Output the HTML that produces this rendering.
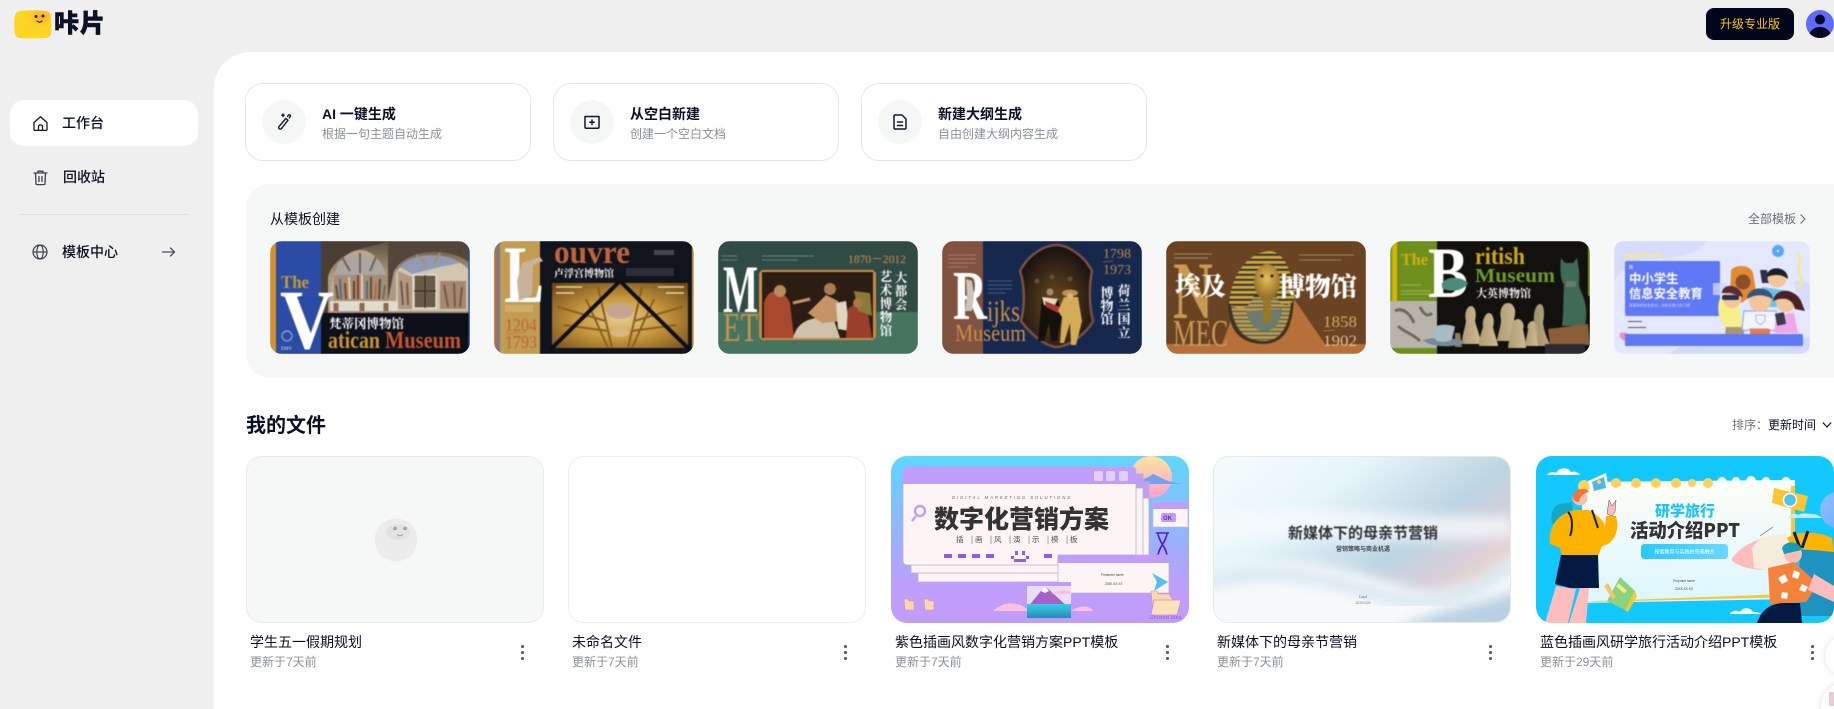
<!DOCTYPE html>
<html lang="zh-CN">
<head>
<meta charset="utf-8">
<title>咔片</title>
<style>
html,body{margin:0;padding:0;width:1834px;height:709px;overflow:hidden}
#root{position:relative;width:1834px;height:709px;overflow:hidden;background:#efefef;font-family:"Liberation Sans","Noto Sans CJK SC",sans-serif;color:#0b0f24}
.a{position:absolute;white-space:nowrap}
.main{position:absolute;left:214px;top:52px;width:1620px;height:657px;background:#fff;border-top-left-radius:36px}
.nav{font-size:14px;line-height:20px;font-weight:500;color:#0b0f24}
.card{position:absolute;top:83px;width:284px;height:76px;border:1px solid #e4e6e7;border-radius:18px;background:#fff;box-sizing:content-box}
.circ{position:absolute;left:16px;top:16px;width:44px;height:44px;border-radius:50%;background:#f5f7f6}
.card b{position:absolute;left:76px;top:20px;font-size:14px;line-height:20px;font-weight:700;color:#0b0f24;white-space:nowrap}
.card span{position:absolute;left:76px;top:41px;font-size:12px;line-height:18px;color:#8b9098;white-space:nowrap}
.card svg{position:absolute;left:28px;top:28px}
.panel{position:absolute;left:246px;top:184px;width:1588px;height:194px;background:#f6f8f7;border-radius:24px 0 0 24px}
.th{position:absolute;top:241px;width:200px;height:113px;border-radius:12px;overflow:hidden}
.th svg{display:block;filter:blur(.4px)}
.fc{position:absolute;top:456px;width:298px;height:167px;border-radius:16px;overflow:hidden;box-sizing:border-box}
.fc svg{display:block}
.ft{position:absolute;top:632px;font-size:14px;line-height:20px;color:#0b0f24;white-space:nowrap}
.fs{position:absolute;top:653px;font-size:12px;line-height:18px;color:#8b9098;white-space:nowrap}
.dots{position:absolute;top:645px;width:3px;height:16px}
.dots i{display:block;width:2.500px;height:2.500px;border-radius:50%;background:#555a68;margin-bottom:3.500px}
</style>
</head>
<body>
<div id="root">
<!-- logo -->
<svg class="a" style="left:14px;top:10px" width="38" height="29" viewBox="0 0 38 29">
<defs><radialGradient id="lg" cx=".72" cy=".25" r=".55"><stop offset="0" stop-color="#fba82a"/><stop offset=".55" stop-color="#ffcf24"/><stop offset="1" stop-color="#ffd523"/></radialGradient></defs>
<path d="M6 1C14 0 26 0 32 1C36 1.500 37 4 37 8C37.500 14 37.500 20 37 23C36.500 27 34 28 30 28C22 28.500 12 28.500 6 28C2 27.500 .5 25 .5 21C0 15 0 10 .8 6C1.300 3 3 1.500 6 1Z" fill="url(#lg)"/>
<circle cx="22" cy="6.500" r="1.500" fill="#2a1c10"/><circle cx="29" cy="6" r="1.500" fill="#2a1c10"/>
<path d="M23 11q2.500 2.500 5 0" stroke="#2a1c10" stroke-width="1.100" fill="none" stroke-linecap="round"/>
</svg>
<div class="a" style="left:54px;top:6px;font-size:25px;line-height:36px;font-weight:900;color:#0b1024;letter-spacing:1px;-webkit-text-stroke:.5px #0b1024">咔片</div>

<div class="a" style="left:1706px;top:8px;width:88px;height:32px;border-radius:8px;background:#02051a;color:#f4c81e;font-size:12px;line-height:32px;text-align:center">升级专业版</div>
<svg class="a" style="left:1806px;top:10px" width="28" height="28" viewBox="0 0 28 28">
<circle cx="14" cy="14" r="14" fill="#5b6cff"/><circle cx="14" cy="9.500" r="5" fill="#06091f"/><path d="M3.600 23.500C6 18.500 10 17 14 17C18 17 22 18.500 24.400 23.500C21.800 26.300 18 28 14 28C10 28 6.200 26.300 3.600 23.500Z" fill="#06091f"/>
</svg>

<!-- sidebar -->
<div class="a" style="left:10px;top:100px;width:188px;height:46px;border-radius:14px;background:#fff"></div>
<svg class="a" style="left:32px;top:115px" width="17" height="17" viewBox="0 0 17 17" fill="none" stroke="#141829" stroke-width="1.300" stroke-linejoin="round"><path d="M2 7.500L8.500 1.800L15 7.500V14.200C15 15 14.500 15.400 13.800 15.400H3.200C2.500 15.400 2 15 2 14.200Z"/><path d="M6.500 15.400V11.500C6.500 10.500 7.500 10 8.500 10C9.500 10 10.500 10.500 10.500 11.500V15.400"/></svg>
<div class="a nav" style="left:62px;top:113px">工作台</div>
<svg class="a" style="left:32px;top:169px" width="17" height="17" viewBox="0 0 17 17" fill="none" stroke="#3e4250" stroke-width="1.300" stroke-linecap="round" stroke-linejoin="round"><path d="M2 4H15M6 4V2.200H11V4M3.500 4L4 14.500C4 15.200 4.500 15.600 5.200 15.600H11.800C12.500 15.600 13 15.200 13 14.500L13.500 4M7 7.500V12.500M10 7.500V12.500"/></svg>
<div class="a nav" style="left:63px;top:167px">回收站</div>
<div class="a" style="left:20px;top:214px;width:168px;height:1px;background:#dedede"></div>
<svg class="a" style="left:32px;top:244px" width="16" height="16" viewBox="0 0 16 16" fill="none" stroke="#3e4250" stroke-width="1.200"><circle cx="8" cy="8" r="7"/><ellipse cx="8" cy="8" rx="3.200" ry="7"/><path d="M1 8H15"/></svg>
<div class="a nav" style="left:62px;top:242px">模板中心</div>
<svg class="a" style="left:161px;top:246px" width="15" height="12" viewBox="0 0 15 12" fill="none" stroke="#4c5160" stroke-width="1.300" stroke-linecap="round" stroke-linejoin="round"><path d="M1.500 6H13.500M9.500 2L13.500 6L9.500 10"/></svg>

<div class="main"></div>

<!-- action cards -->
<div class="card" style="left:245px">
<div class="circ"></div>
<svg width="20" height="20" viewBox="0 0 20 20" fill="none" stroke="#141829" stroke-width="1.400" stroke-linecap="round" stroke-linejoin="round"><path d="M11.800 6.500L14 8.200L7.500 16.500C7 17.200 6 17.300 5.300 16.800C4.600 16.300 4.500 15.300 5 14.600Z"/><path d="M13.500 4.500L14.500 3.200C15 2.700 15.600 2.700 16 3C16.500 3.400 16.500 4 16.200 4.500L15.300 5.800"/><path d="M9 2V4.500M7.800 3.200H10.200"/></svg>
<b>AI 一键生成</b><span>根据一句主题自动生成</span></div>
<div class="card" style="left:553px">
<div class="circ"></div>
<svg width="20" height="20" viewBox="0 0 20 20" fill="none" stroke="#141829" stroke-width="1.500" stroke-linecap="round" stroke-linejoin="round"><path d="M3 4.500H17V15C17 15.800 16.500 16.200 15.800 16.200H4.200C3.500 16.200 3 15.800 3 15Z"/><path d="M10 8V12.500M7.800 10.200H12.200"/></svg>
<b>从空白新建</b><span>创建一个空白文档</span></div>
<div class="card" style="left:861px">
<div class="circ"></div>
<svg width="20" height="20" viewBox="0 0 20 20" fill="none" stroke="#141829" stroke-width="1.500" stroke-linecap="round" stroke-linejoin="round"><path d="M4 4.200C4 3.400 4.500 3 5.200 3H12L16 7V15.800C16 16.600 15.500 17 14.800 17H5.200C4.500 17 4 16.600 4 15.800Z"/><path d="M7.500 10H12.500M7.500 13.500H12.500"/></svg>
<b>新建大纲生成</b><span>自由创建大纲内容生成</span></div>

<div class="panel"></div>
<div class="a" style="left:270px;top:209px;font-size:14px;line-height:20px;color:#0b0f24">从模板创建</div>
<div class="a" style="left:1748px;top:210px;font-size:12px;line-height:18px;color:#6a6f7a">全部模板</div>
<svg class="a" style="left:1799px;top:213px" width="8" height="12" viewBox="0 0 8 12" fill="none" stroke="#6a6f7a" stroke-width="1.100"><path d="M1.500 1.500L6 6L1.500 10.500"/></svg>

<!-- T1 Vatican -->
<div class="th" style="left:270px">
<svg width="200" height="113" viewBox="0 0 200 113">
<defs><linearGradient id="v1" x1="0" y1="0" x2="0" y2="1"><stop offset="0" stop-color="#5e5040"/><stop offset=".5" stop-color="#b09c82"/><stop offset="1" stop-color="#a8967c"/></linearGradient></defs>
<rect width="200" height="113" fill="#0d0f1a"/>
<rect x="0" width="6" height="113" fill="#d3932a"/><rect x="6" width="45" height="113" fill="#2a4ca4"/>
<rect x="51" width="149" height="72" fill="url(#v1)"/>
<path d="M51 0H118C108 6 66 6 58 36V72H51Z" fill="#4a3e32"/>
<path d="M60 60C60 26 76 9 90 9C106 9 120 28 120 60Z" fill="#b9a78e"/>
<path d="M68 22C76 13 102 13 112 24L115 34H65Z" fill="#a9a6a4"/>
<path d="M72 16l8 14M90 12v20M106 16l-6 14" stroke="#6f6256" stroke-width="2"/>
<path d="M64 34H118V60H64Z" fill="#a58e74"/>
<g stroke-width="2" fill="none">
<path d="M66 44l2 14" stroke="#6a4a38"/><path d="M70 38l1 20" stroke="#4e6c8a"/><path d="M75 42l1 16" stroke="#8a3f32"/><path d="M79 36l1 22" stroke="#d8cbb4"/><path d="M84 40v18" stroke="#5a4638"/><path d="M88 34v24" stroke="#8a3f32"/><path d="M92 34v24" stroke="#dcd0ba"/><path d="M97 40v18" stroke="#4e6c8a"/><path d="M101 36v22" stroke="#6a4a38"/><path d="M106 42l-1 16" stroke="#b06a44"/><path d="M110 38l-1 20" stroke="#5a4a3c"/><path d="M115 44l-2 14" stroke="#7a6a58"/>
</g>
<path d="M118 0H200V22C180 6 138 6 124 30L118 60Z" fill="#54463a"/>
<path d="M126 32C134 14 180 8 198 28V70H126Z" fill="#d2c6b0"/>
<path d="M130 26C140 12 176 10 190 22L170 26L142 33Z" fill="#8f9cb4"/>
<path d="M146 14l10 8M170 12l-6 10" stroke="#b08a68" stroke-width="2"/>
<path d="M128 30L142 36V68H128Z" fill="#b29880"/>
<path d="M131 40l2 24M137 42l1 22" stroke="#6f5a4a" stroke-width="2"/>
<rect x="144" y="34" width="22" height="33" fill="#6a5a48" stroke="#efe8dc" stroke-width="1.200"/><path d="M155 34V67M144 50H166" stroke="#2c2620" stroke-width="1"/>
<rect x="170" y="40" width="26" height="28" fill="#a68870"/><path d="M174 44l4 22M184 42l1 24M192 46l-2 20" stroke="#6f5a4a" stroke-width="2"/>
<rect x="60" y="60" width="68" height="10" fill="#e2dbcf"/><path d="M66 62v8M92 62v8M116 62v8" stroke="#8c6a50" stroke-width="5"/>
<rect x="198.500" width="1.500" height="113" fill="#2a4ca4"/>
<text x="11" y="47" font-family="Liberation Serif,serif" font-weight="700" font-size="18" fill="#c99a35" textLength="28" lengthAdjust="spacingAndGlyphs">The</text>
<text x="10" y="107" font-family="Liberation Serif,serif" font-weight="700" font-size="85" fill="#fff" textLength="54" lengthAdjust="spacingAndGlyphs">V</text>
<text x="59" y="87" font-family="Noto Serif CJK SC,serif" font-weight="700" font-size="12.500" fill="#fff">梵蒂冈博物馆</text>
<text x="58" y="107" font-family="Liberation Serif,serif" font-weight="700" font-size="24" fill="#c8962e" textLength="52" lengthAdjust="spacingAndGlyphs">atican</text>
<text x="115" y="107" font-family="Liberation Serif,serif" font-weight="700" font-size="24" fill="#c5562a" textLength="76" lengthAdjust="spacingAndGlyphs">Museum</text>
<circle cx="17" cy="95" r="5" fill="none" stroke="#dfe4f2" stroke-width=".7"/><text x="11" y="109" font-size="5" fill="#dfe4f2" font-family="Liberation Serif,serif">EMV</text>
</svg></div>

<!-- T2 Louvre -->
<div class="th" style="left:494px">
<svg width="200" height="113" viewBox="0 0 200 113">
<defs><radialGradient id="l1" cx=".5" cy=".55" r=".7"><stop offset="0" stop-color="#e6cc90"/><stop offset=".45" stop-color="#c8983c"/><stop offset="1" stop-color="#6e4a1c"/></radialGradient></defs>
<rect width="200" height="113" fill="#11131d"/>
<rect width="3" height="113" fill="#c06a3a"/><rect x="3" width="3" height="113" fill="#6c7a92"/><rect x="6" width="40" height="113" fill="#c19c52"/>
<rect x="198" width="2" height="113" fill="#c19c52"/>
<text x="10" y="61" font-family="Liberation Serif,serif" font-weight="700" font-size="82" fill="#fff" textLength="40" lengthAdjust="spacingAndGlyphs">L</text>
<path d="M28 22l18-6l3 4l-10 4l-1 30l-13 6l-2-20z" fill="#c9b29a"/>
<text x="60" y="22" font-family="Liberation Serif,serif" font-weight="700" font-size="33" fill="#bd653a" textLength="76" lengthAdjust="spacingAndGlyphs">ouvre</text>
<text x="60" y="36" font-family="Noto Serif CJK SC,serif" font-weight="700" font-size="10" fill="#fff">卢浮宫博物馆</text>
<rect x="58" y="42" width="136" height="65" fill="url(#l1)"/>
<ellipse cx="126" cy="70" rx="13" ry="8" fill="#c6a48e"/>
<ellipse cx="126" cy="92" rx="9" ry="4" fill="#d8b880"/>
<path d="M104 46L118 107M148 46L134 107M92 58L114 107M160 58L138 107" stroke="#8a5e22" stroke-width="2"/>
<path d="M64 66L112 80M188 66L140 80M70 84L114 90M182 84L138 90" stroke="#8a5e22" stroke-width="2"/>
<path d="M62 46h26M164 46h26M62 52h18M172 52h18" stroke="#f0d690" stroke-width="1.600"/>
<path d="M126 40L56 109M126 40L196 109" stroke="#0e0e12" stroke-width="4"/>
<text x="11" y="90" font-family="Liberation Serif,serif" font-size="18" fill="#bd653a" textLength="32" lengthAdjust="spacingAndGlyphs">1204</text>
<path d="M12 93l20-2" stroke="#bd653a" stroke-width=".6"/>
<text x="11" y="107" font-family="Liberation Serif,serif" font-size="18" fill="#bd653a" textLength="32" lengthAdjust="spacingAndGlyphs">1793</text>
<rect x="11" y="64" width="28" height="7" fill="#d8bb7a" opacity=".6"/>
<rect x="160" y="9" width="20" height="5" fill="#454650"/>
<rect x="132" y="27" width="48" height="8" fill="#2c2d38"/>
</svg></div>

<!-- T3 MET -->
<div class="th" style="left:718px">
<svg width="200" height="113" viewBox="0 0 200 113">
<rect width="200" height="113" fill="#47745f"/><rect width="200" height="71" fill="#2f4b43"/>
<text x="5" y="71" font-family="Liberation Serif,serif" font-weight="700" font-size="68" fill="#fff" textLength="35" lengthAdjust="spacingAndGlyphs">M</text>
<text x="5" y="100" font-family="Liberation Serif,serif" font-size="41" fill="#c9914f" textLength="35" lengthAdjust="spacingAndGlyphs">ET</text>
<text x="130" y="22" font-family="Liberation Serif,serif" font-size="12" fill="#c9914f" textLength="58" lengthAdjust="spacingAndGlyphs">1870－2012</text>
<path d="M44 29H155L158 32V96L155 99H44L41 96V32Z" fill="#c88a48"/>
<rect x="44" y="31" width="111" height="66" fill="#2b1d12"/>
<path d="M46 97V62C50 45 66 48 72 62L76 97Z" fill="#a8492f"/>
<path d="M56 50a6 6 0 1 0 12 0a6 6 0 1 0-12 0" fill="#b98a60"/>
<path d="M75 97C80 78 95 76 115 76L122 97Z" fill="#cfc2a8"/>
<path d="M90 72L108 54L120 60L124 80L104 82Z" fill="#c49468"/><circle cx="112" cy="48" r="6" fill="#a87c52"/>
<path d="M118 62L128 60L132 90L120 88Z" fill="#ddd6c0"/>
<path d="M128 97L130 68C135 62 148 62 150 72L154 97Z" fill="#9a3f2a"/>
<path d="M136 50L152 52L154 75L140 70Z" fill="#8a7a36"/><circle cx="140" cy="62" r="5" fill="#a87848"/>
<path d="M75 62L92 58" stroke="#c49468" stroke-width="3"/>
<g font-family="Noto Serif CJK SC,serif" font-weight="700" fill="#fff" font-size="12.500"><text x="168" y="29" style="writing-mode:vertical-rl" letter-spacing="1">艺术博物馆</text><text x="183" y="30" style="writing-mode:vertical-rl" letter-spacing="1">大都会</text></g>
<path d="M3 15h16M3 19h16" stroke="#7a948a" stroke-width=".8"/><path d="M44 15h52M44 19h36" stroke="#7a948a" stroke-width=".8"/>
</svg></div>

<!-- T4 Rijks -->
<div class="th" style="left:942px">
<svg width="200" height="113" viewBox="0 0 200 113">
<defs><radialGradient id="r1" cx=".5" cy=".58" r=".55"><stop offset="0" stop-color="#6e4c24"/><stop offset="1" stop-color="#1c1410"/></radialGradient></defs>
<rect width="200" height="113" fill="#17284f"/><rect width="41" height="113" fill="#80523f"/>
<path d="M115 4C125 4 142 14 150 30C147 45 147 65 151 80C145 92 128 105 115 106C102 105 88 92 79 80C83 65 83 45 78 30C86 14 102 4 115 4Z" fill="url(#r1)" stroke="#7a5145" stroke-width="2.500"/>
<path d="M100 56l16 2l4 18l-5 24h-6l-2-18l-5 18h-6l2-24z" fill="#15100c"/><path d="M100 56l16 2l-4 8l-10-2z" fill="#e2d8c0"/><path d="M103 60l15 6l-2 6l-12-6z" fill="#b0342a"/>
<path d="M122 56l14 0l4 24l-6 24h-5l-1-22l-6 20h-4l2-26l-4-6z" fill="#d2ac56"/><ellipse cx="128" cy="52" rx="8" ry="3.500" fill="#c09250"/><circle cx="128" cy="55" r="3" fill="#d8b888"/>
<circle cx="108" cy="51" r="3.500" fill="#a68a68"/><circle cx="95" cy="40" r="2.500" fill="#6a4e34"/><circle cx="110" cy="36" r="2.500" fill="#6a4e34"/><circle cx="128" cy="38" r="2.500" fill="#6a4e34"/>
<text x="11" y="78" font-family="Liberation Serif,serif" font-weight="700" font-size="70" fill="#fff" textLength="34" lengthAdjust="spacingAndGlyphs">R</text>
<path d="M24 38l6 2l2 14l-2 16h-7l2-16z" fill="#ccc6ba"/>
<text x="45" y="80" font-family="Liberation Serif,serif" font-size="30" fill="#c78f45" textLength="33" lengthAdjust="spacingAndGlyphs">ijks</text>
<text x="13" y="100" font-family="Liberation Serif,serif" font-size="24" fill="#c78f45" textLength="71" lengthAdjust="spacingAndGlyphs">Museum</text>
<text x="161" y="17" font-family="Liberation Serif,serif" font-size="14" fill="#b58a4a" textLength="28" lengthAdjust="spacingAndGlyphs">1798</text>
<path d="M161 21l10-1" stroke="#b58a4a" stroke-width=".6"/>
<text x="161" y="33" font-family="Liberation Serif,serif" font-size="14" fill="#b58a4a" textLength="28" lengthAdjust="spacingAndGlyphs">1973</text>
<g font-family="Noto Serif CJK SC,serif" font-weight="700" fill="#fff" font-size="13"><text x="165" y="45" style="writing-mode:vertical-rl">博物馆</text><text x="182" y="43" style="writing-mode:vertical-rl" letter-spacing="1">荷兰国立</text></g>
<path d="M6 14h28M6 18h28M6 22h28M6 26h20" stroke="#c9a898" stroke-width=".8" opacity=".7"/>
<path d="M46 40h24M46 44h24M46 48h24M46 52h18" stroke="#5a6a8a" stroke-width=".8"/>
</svg></div>

<!-- T5 Egypt -->
<div class="th" style="left:1166px">
<svg width="200" height="113" viewBox="0 0 200 113">
<defs>
<pattern id="e1" width="8" height="5" patternUnits="userSpaceOnUse"><rect width="8" height="5" fill="#d2a632"/><rect y="2.800" width="8" height="2" fill="#2a3044"/></pattern>
<pattern id="e2" width="8" height="4" patternUnits="userSpaceOnUse"><rect width="8" height="4" fill="#c09a44"/><rect y="1.800" width="8" height="1.300" fill="#46606c"/></pattern>
<radialGradient id="e3" cx=".5" cy=".4" r=".6"><stop offset="0" stop-color="#e4be5a"/><stop offset="1" stop-color="#8e6a22"/></radialGradient>
</defs>
<rect width="200" height="113" fill="#6a4322"/>
<path d="M0 103H56L68 72L126 55L159 103H200V113H0Z" fill="#b8703a"/>
<text x="7" y="77" font-family="Liberation Serif,serif" font-weight="700" font-size="82" fill="#c79a55" textLength="40" lengthAdjust="spacingAndGlyphs">N</text>
<text x="7" y="105" font-family="Liberation Serif,serif" font-size="38" fill="#c79a55" textLength="55" lengthAdjust="spacingAndGlyphs">MEC</text>
<path d="M62 60C62 92 76 103 98 103C118 102 127 88 128 56L120 50H70Z" fill="#40341e"/>
<path d="M65 64C68 90 80 100 98 100C114 100 124 86 125 58L108 56H78Z" fill="url(#e2)"/>
<path d="M80 70C84 84 90 90 98 90C108 90 114 84 116 68Z" fill="#6c7a6e"/>
<path d="M63 62C66 30 84 11 104 10C120 12 126 32 129 58C122 68 112 64 110 54L88 54C84 70 70 70 63 62Z" fill="url(#e1)"/>
<ellipse cx="101" cy="41" rx="13" ry="18" fill="url(#e3)"/>
<path d="M97 58h8v24h-8z" fill="#9a7628"/><circle cx="96" cy="35" r="1.500" fill="#222"/><circle cx="106" cy="35" r="1.500" fill="#222"/>
<text x="9" y="54" font-family="Noto Serif CJK SC,serif" font-weight="900" font-size="25.500" fill="#fff">埃及</text>
<text x="113" y="55" font-family="Noto Serif CJK SC,serif" font-weight="900" font-size="26" fill="#fff">博物馆</text>
<text x="157" y="86" font-family="Liberation Serif,serif" font-size="16" fill="#d6a868" textLength="34" lengthAdjust="spacingAndGlyphs">1858</text>
<path d="M157 90l12-1" stroke="#d6a868" stroke-width=".6"/>
<text x="157" y="105" font-family="Liberation Serif,serif" font-size="16" fill="#e0c090" textLength="34" lengthAdjust="spacingAndGlyphs">1902</text>
<path d="M8 13h38M8 17h34" stroke="#a08a6c" stroke-width="1"/><path d="M133 14h55M133 19h42" stroke="#9a8468" stroke-width="1"/>
</svg></div>

<!-- T6 British -->
<div class="th" style="left:1390px">
<svg width="200" height="113" viewBox="0 0 200 113">
<defs><linearGradient id="b1" x1="0" y1="0" x2="1" y2="0"><stop offset="0" stop-color="#b09c74"/><stop offset="1" stop-color="#cdbb96"/></linearGradient></defs>
<rect width="200" height="113" fill="#12110d"/>
<rect x="0" width="2.500" height="60" fill="#8a9a2a"/><rect x="2.500" width="4.500" height="60" fill="#d9b400"/><rect x="7" width="40" height="60" fill="#6f8f1d"/>
<rect x="198" width="2" height="55" fill="#6f8f1d"/>
<rect y="60" width="47" height="47" fill="#b9b4ab"/><path d="M5 70C12 66 20 72 24 82M8 85C15 92 22 92 30 100M30 66C34 74 38 76 42 72" stroke="#6f6a60" stroke-width="3" fill="none"/>
<rect y="107" width="47" height="6" fill="#6f8f1d"/>
<text x="11" y="24" font-family="Liberation Serif,serif" font-weight="700" font-size="17" fill="#cdb010" textLength="27" lengthAdjust="spacingAndGlyphs">The</text>
<text x="38" y="56" font-family="Liberation Serif,serif" font-weight="700" font-size="72" fill="#fff" textLength="40" lengthAdjust="spacingAndGlyphs">B</text>
<path d="M52 42C58 34 72 36 78 42C74 50 60 52 52 47Z" fill="#4e8a7a"/>
<text x="85" y="23" font-family="Liberation Serif,serif" font-weight="700" font-size="24" fill="#cda91d" textLength="50" lengthAdjust="spacingAndGlyphs">ritish</text>
<text x="85" y="41" font-family="Liberation Serif,serif" font-weight="700" font-size="20" fill="#6f9b27" textLength="80" lengthAdjust="spacingAndGlyphs">Museum</text>
<text x="86" y="56" font-family="Noto Serif CJK SC,serif" font-weight="700" font-size="11" fill="#fff">大英博物馆</text>
<g fill="url(#b1)">
<path d="M72 103C72 94 75 88 76 80C74 72 77 65 81 65C85 65 87 72 85 80C87 88 90 94 91 103Z"/>
<path d="M89 105C89 96 92 90 93 86C92 80 95 72 99 72C103 72 105 80 103 86C104 92 107 98 108 105Z"/>
<path d="M107 100C108 92 111 86 111 78C109 70 112 62 118 62C124 62 127 70 124 78C125 86 129 92 130 100Z"/>
<path d="M118 107C119 98 121 92 122 88C120 84 124 78 128 78C132 78 135 84 133 88C134 94 136 100 136 107Z"/>
<path d="M135 105C136 96 138 92 138 88C136 84 140 80 143 80C146 80 148 84 147 88C148 94 148 100 148 105Z"/>
<path d="M144 80C143 72 146 63 150 63C154 63 155 72 153 82C154 90 157 98 161 105H148Z" opacity=".9"/>
</g>
<path d="M65 92h5l2 14h-7z" fill="#8f7a56"/>
<path d="M33 99C40 96 68 96 75 101C68 107 40 107 33 99Z" fill="#748a98"/>
<path d="M43 86C48 83 62 83 65 86L62 98C58 102 48 102 45 98Z" fill="#a8bac6"/>
<path d="M171 17l4 5h8l4-5l2 12C190 38 188 42 190 48C196 60 198 72 195 85H172C174 72 173 55 174 44C170 38 170 26 171 17Z" fill="#3f6a55"/>
<path d="M176 40h10v6h-10z" fill="#6c7a6a"/>
<path d="M158 88L198 83L200 104H160Z" fill="#8a5f3a"/>
<rect x="155" y="103" width="40" height="10" fill="#2a2a30"/>
<path d="M11 44h20M11 50h30M11 53h30" stroke="#b5c47a" stroke-width=".8"/>
</svg></div>

<!-- T7 Education -->
<div class="th" style="left:1614px;width:196px;border-radius:10px">
<svg width="196" height="113" viewBox="0 0 196 113">
<rect width="196" height="113" fill="#e3e8ff"/>
<path d="M0 0H92C90 12 60 18 35 18C20 18 8 28 0 40Z" fill="#d6dcfe"/>
<path d="M56 113C70 98 110 96 150 104C170 108 185 96 196 96V113Z" fill="#d2daff"/>
<path d="M180 40C188 38 196 42 196 46V70C190 68 182 55 180 40Z" fill="#d6dcfe"/>
<path d="M11 16C16 10 20 20 26 14C30 10 34 18 40 14C44 12 46 16 47 16" stroke="#f7e88a" stroke-width="2.400" fill="none" stroke-linecap="round"/>
<path d="M183 12C190 20 182 26 186 34C190 40 184 44 186 48" stroke="#f7e88a" stroke-width="2.400" fill="none" stroke-linecap="round"/>
<circle cx="164" cy="10" r="6" fill="#58a8f5"/><circle cx="164" cy="10" r="1" fill="#fff"/>
<rect x="11" y="20" width="95" height="55" rx="2" fill="#5f78f5"/>
<text x="15" y="42" font-weight="700" font-size="12.400" fill="#fff" font-family="Noto Sans CJK SC,sans-serif">中小学生</text>
<text x="15" y="57" font-weight="700" font-size="12.300" fill="#fff" font-family="Noto Sans CJK SC,sans-serif">信息安全教育</text>
<text x="15" y="65.500" font-size="3.600" fill="#d4dbff" font-family="Noto Sans CJK SC,sans-serif">提高网络安全意识，培养正确上网习惯</text>
<rect x="15" y="24" width="4" height="4" fill="#a8b6fa"/>
<rect x="99" y="42" width="14" height="12" fill="#cfd7ff" opacity=".8"/>
<rect x="14" y="80" width="14" height="1" fill="#555"/><rect x="14" y="86" width="18" height="1" fill="#555"/>
<ellipse cx="12" cy="96" rx="7" ry="4" fill="#f08ac8" transform="rotate(25 12 96)"/>
<rect x="11" y="93" width="178" height="12" rx="1.500" fill="#5f78f5"/>
<path d="M117 30C118 24 136 22 139 32L142 50L128 62L116 54Z" fill="#e28a30"/><circle cx="129" cy="41" r="7.500" fill="#8a4e2c"/>
<path d="M146 29h7l2 13h-7z" fill="#2c3050"/>
<circle cx="163" cy="37" r="9.500" fill="#f3c59a"/><path d="M153 36C152 24 174 24 174 38C168 33 160 33 153 36Z" fill="#1e1e2a"/>
<path d="M148 46L176 50L174 66H152Z" fill="#66c4e6"/>
<path d="M106 78C103 70 104 58 108 54L124 60L129 88H112Z" fill="#f7ef8a"/>
<path d="M112 86H130V93H111Z" fill="#a89872"/>
<circle cx="118" cy="58" r="9" fill="#f3c59a"/><path d="M108 52C108 42 126 42 129 56L116 52Z" fill="#5a2a36"/><rect x="108" y="54" width="17" height="5" rx="2" fill="#2c3050"/>
<path d="M130 70H162L164 88C160 90 156 90 154 88H136C134 90 130 90 128 88Z" fill="#f2f5ff" stroke="#98a8f4" stroke-width="1.200"/>
<path d="M142 74h9l0 6l-4.500 4l-4.500-4z" fill="none" stroke="#aab6f4" stroke-width="1"/>
<rect x="136" y="88" width="20" height="5" fill="#ec7a3a"/>
<circle cx="146" cy="60" r="11" fill="#f3c59a"/><path d="M133 58C133 44 158 44 159 58C150 53 141 53 133 58Z" fill="#3a547a"/>
<circle cx="172" cy="61" r="10" fill="#f3c59a"/><path d="M159 60C161 46 181 47 187 60L191 70L181 68C178 56 168 56 159 60Z" fill="#4a2026"/>
<path d="M162 74L180 72L184 92H160Z" fill="#f0a6ea"/><rect x="162" y="72" width="9" height="12" fill="#3a3c4c" transform="rotate(-12 166 78)"/>
</svg></div>

<!-- my files -->
<div class="a" style="left:246px;top:412px;font-size:20px;line-height:28px;font-weight:700;color:#0b0f24">我的文件</div>
<div class="a" style="left:1732px;top:416px;font-size:12px;line-height:18px;color:#70747e">排序：<span style="color:#0b0f24">更新时间</span></div>
<svg class="a" style="left:1822px;top:421px" width="10" height="8" viewBox="0 0 10 8" fill="none" stroke="#0b0f24" stroke-width="1.200"><path d="M.8 1.500L5 6L9.200 1.500"/></svg>

<div class="fc" style="left:246px;background:#f6f8f7;border:1px solid #e8eaea">
<svg class="a" style="left:127px;top:61px" width="44" height="44" viewBox="0 0 44 44"><circle cx="22" cy="22" r="21.500" fill="#ececed"/><ellipse cx="24" cy="14" rx="12" ry="8" fill="#e2e2e3"/><circle cx="21" cy="10.500" r="1.800" fill="#9ea0a4"/><circle cx="31" cy="10.500" r="1.800" fill="#9ea0a4"/><path d="M23.500 16.500q2.500 2.500 5 0" stroke="#9ea0a4" stroke-width="1.100" fill="none" stroke-linecap="round"/></svg>
</div>
<div class="fc" style="left:568px;background:#fff;border:1px solid #eeeeee"></div>

<div class="fc" style="left:891px">
<svg width="298" height="167" viewBox="0 0 298 167">
<defs>
<linearGradient id="f1" x1="0" y1="0" x2="0" y2="1"><stop offset="0" stop-color="#5dd6ff"/><stop offset=".55" stop-color="#a0aefc"/><stop offset=".8" stop-color="#c09dfb"/></linearGradient>
<linearGradient id="f2" x1="0" y1="0" x2="0" y2="1"><stop offset="0" stop-color="#fde4a0"/><stop offset="1" stop-color="#fca0d0"/></linearGradient>
<linearGradient id="f3" x1="0" y1="0" x2="0" y2="1"><stop offset="0" stop-color="#35d0e6"/><stop offset="1" stop-color="#2a8ab6"/></linearGradient>
</defs>
<rect width="298" height="167" fill="url(#f1)"/>
<circle cx="260" cy="21" r="21" fill="url(#f2)"/>
<path d="M246 28C252 22 258 22 262 18C268 20 274 26 292 28Z" fill="#74a0f0"/>
<g stroke="#bdb0c8" stroke-width=".8">
<rect x="27" y="40" width="215" height="86" fill="#fdf4f5"/>
<rect x="20" y="30" width="214" height="87" fill="#fdf4f5"/>
<path d="M240 26h18v100h-18z" fill="#fdf4f5"/><path d="M240 26h18v16h-18z" fill="#c09dfb"/>
<path d="M237 18h15v100h-15z" fill="#fdf4f5"/><path d="M237 18h15v14h-15z" fill="#c09dfb"/>
<rect x="12" y="11" width="233" height="98" rx="4" fill="#fdf4f5"/>
</g>
<path d="M12 28V15a4 4 0 0 1 4-4H241a4 4 0 0 1 4 4V28Z" fill="#c09dfb"/>
<rect x="203" y="15" width="9" height="10" rx="2" fill="#e2ceff"/><rect x="215" y="15" width="9" height="10" rx="2" fill="#e2ceff"/><rect x="228" y="15" width="9" height="10" rx="2" fill="#e2ceff"/>
<text x="61" y="43" font-size="4.200" font-style="italic" fill="#666" letter-spacing="1.950" font-family="Liberation Sans,sans-serif">DIGITAL MARKETING SOLUTIONS</text>
<circle cx="29" cy="55" r="5" fill="none" stroke="#c09dfb" stroke-width="2.500"/><path d="M25 60L21 65" stroke="#c09dfb" stroke-width="2.500"/>
<text x="43" y="72" font-size="25" font-weight="900" fill="#333" font-family="Noto Sans CJK SC,sans-serif">数字化营销方案</text>
<text y="86" font-size="7.500" fill="#555" font-family="Noto Sans CJK SC,sans-serif"><tspan x="65">插</tspan><tspan x="80">|</tspan><tspan x="84">画</tspan><tspan x="99">|</tspan><tspan x="103">风</tspan><tspan x="118">|</tspan><tspan x="122">演</tspan><tspan x="137">|</tspan><tspan x="141">示</tspan><tspan x="156">|</tspan><tspan x="160">模</tspan><tspan x="175">|</tspan><tspan x="179">板</tspan></text>
<g fill="#9a58e8"><rect x="53" y="98" width="8" height="4"/><rect x="67" y="98" width="8" height="4"/><rect x="81" y="98" width="8" height="4"/><rect x="95" y="98" width="8" height="4"/><rect x="153" y="98" width="8" height="4"/>
<rect x="124" y="95" width="3" height="4"/><rect x="131" y="95" width="3" height="4"/><rect x="123" y="103" width="12" height="3"/><rect x="120" y="100" width="3" height="3"/><rect x="135" y="100" width="3" height="3"/></g>
<rect x="262" y="46" width="35" height="25" fill="#fdf4f5" stroke="#c0b4d0" stroke-width=".6"/><rect x="262" y="46" width="35" height="7" fill="#c09dfb"/>
<rect x="270" y="57" width="15" height="9" rx="2" fill="#c09dfb"/><text x="272" y="64" font-size="6" font-weight="700" fill="#5a3a9a" font-family="Liberation Sans,sans-serif">OK</text>
<path d="M265 77h13M265 100h13M267 77C267 85 276 92 276 100M276 77C276 85 267 92 267 100" stroke="#5a18d8" stroke-width="1.600" fill="none"/>
<rect x="167" y="99" width="111" height="38" fill="#fdf4f5" stroke="#b8a8cc" stroke-width=".7"/><rect x="167" y="99" width="111" height="8" fill="#c09dfb"/>
<text x="210" y="120" font-size="3.200" fill="#444" font-family="Liberation Sans,sans-serif">Presenter name</text>
<text x="214" y="129" font-size="3.200" fill="#444" font-family="Liberation Sans,sans-serif">2030.XX.XX</text>
<path d="M261 117L277 126L263 135L266 126Z" fill="#4cc4ee"/>
<path d="M102 155C110 148 118 146 125 148C130 148 134 152 140 155H180C190 148 200 150 202 155Z" fill="#fbc0dc"/>
<rect x="136" y="126" width="44" height="36" fill="#e8def8"/><rect x="136" y="126" width="44" height="4" fill="#c09dfb"/>
<path d="M136 152L154 130L178 152Z" fill="#a860c8"/><path d="M150 135L154 130L158 135L154 137Z" fill="#fff"/>
<rect x="136" y="148" width="44" height="14" fill="url(#f3)"/>
<path d="M165 136C170 133 178 134 182 138H160Z" fill="#fbc0dc"/>
<g fill="#fcd8a8" stroke="#c88ad8" stroke-width=".6"><path d="M13 143h4l1 2h5v9H14Z"/><path d="M33 143h4l1 2h5v9H34Z"/><path d="M260 135h6l1 3h11l4 6l-2 11h-18Z"/></g>
<path d="M263 144h27l-4 15h-26Z" fill="#fde0b8" stroke="#c88ad8" stroke-width=".7"/>
<text x="259" y="163" font-size="5" fill="#8a58d8" letter-spacing=".3" font-family="Liberation Sans,sans-serif">Unused Idea</text>
</svg></div>

<div class="fc" style="left:1213px;border:1px solid #e4e9ec">
<svg width="298" height="167" viewBox="0 0 298 167">
<defs>
<linearGradient id="g1" x1="0" y1="0" x2="1" y2=".7"><stop offset="0" stop-color="#f6fcfd"/><stop offset=".35" stop-color="#e6f5fa"/><stop offset=".68" stop-color="#bdd4e2"/><stop offset=".85" stop-color="#d8cfd8"/><stop offset="1" stop-color="#f0d8ca"/></linearGradient>
<filter id="g2"><feGaussianBlur stdDeviation="6"/></filter>
</defs>
<rect width="298" height="167" fill="url(#g1)"/>
<path d="M-10 125C60 90 130 110 190 130C240 145 280 120 310 90V175H-10Z" fill="#f7f9fb" filter="url(#g2)"/>
<path d="M-10 128C60 105 120 125 180 142C230 152 270 130 310 100" stroke="#cfe4ee" stroke-width="10" fill="none" filter="url(#g2)"/>
<path d="M180 175C220 150 270 150 310 130V175Z" fill="#b8d0e2" filter="url(#g2)"/>
<path d="M0 60C60 40 150 60 300 60V80C150 90 60 70 0 90Z" fill="#f6fafc" opacity=".8" filter="url(#g2)"/>
<g font-family="Noto Sans CJK SC,sans-serif" text-anchor="middle">
<text x="149" y="81" font-size="15" font-weight="700" fill="#2e3136" style="filter:blur(.5px)">新媒体下的母亲节营销</text>
<text x="149" y="94" font-size="6" font-weight="700" fill="#444a52" style="filter:blur(.3px)">营销策略与商业机遇</text>
<text x="149" y="141" font-size="3.500" fill="#6a7078">Capd</text>
<text x="149" y="147" font-size="3.200" fill="#6a7078">2025/5/26</text>
</g>
</svg></div>

<div class="fc" style="left:1536px">
<svg width="298" height="167" viewBox="0 0 298 167">
<defs><linearGradient id="s1" x1="0" y1="0" x2="0" y2="1"><stop offset="0" stop-color="#fdfdf6"/><stop offset="1" stop-color="#dcf6ff"/></linearGradient>
<linearGradient id="s2" x1="0" y1="0" x2="1" y2="0"><stop offset="0" stop-color="#2ac8fb"/><stop offset="1" stop-color="#6ad8ff"/></linearGradient></defs>
<rect width="298" height="167" fill="#13c7ff"/>
<path d="M11 19c3-4 7-3 9-2c3-6 12-6 15-1c4-1 7 0 9 3Z" fill="#fff"/>
<path d="M194 158c3-5 8-3 10-2c3-5 10-5 13 0c3 0 5 0 8 2Z" fill="#fff"/>
<path d="M46 26L259 24V143L46 147Z" fill="url(#s1)"/>
<path d="M52 146L259 141V118H255V138L60 145Z" fill="#fdc434"/>
<path d="M255 30H259V122H255Z" fill="#fdc434"/>
<g fill="#fbd25e"><circle cx="48" cy="30" r="6"/><circle cx="64" cy="27" r="5"/><circle cx="80" cy="27" r="5"/><circle cx="100" cy="27" r="5"/><circle cx="120" cy="27" r="5"/><circle cx="140" cy="27" r="5"/><circle cx="156" cy="27" r="4"/><circle cx="172" cy="27" r="5"/></g>
<g fill="#fff"><circle cx="186" cy="26" r="5"/><circle cx="200" cy="25" r="4"/><circle cx="215" cy="25" r="5"/><circle cx="230" cy="25" r="4"/><circle cx="250" cy="26" r="5"/></g>
<path d="M52 25L70 17L73 34L56 38Z" fill="#fff"/><path d="M56 26L68 21L70 32L58 35Z" fill="#4db8e8"/><circle cx="63" cy="26" r="2" fill="#fbd25e"/>
<text x="149" y="60" text-anchor="middle" font-size="15" font-weight="900" fill="#21c3f4" font-family="Noto Sans CJK SC,sans-serif">研学旅行</text>
<text x="94" y="81" font-size="19" font-weight="900" fill="#333" font-family="Noto Sans CJK SC,sans-serif" textLength="110" lengthAdjust="spacingAndGlyphs">活动介绍PPT</text>
<rect x="105" y="88" width="87" height="15" rx="3.500" fill="url(#s2)"/>
<text x="148.500" y="97.500" text-anchor="middle" font-size="5" fill="#fff" font-family="Noto Sans CJK SC,sans-serif">探索教育与实践的完美融合</text>
<text x="148" y="126" text-anchor="middle" font-size="3.200" fill="#444" font-family="Liberation Sans,sans-serif">Proposer name</text>
<text x="148" y="134" text-anchor="middle" font-size="3.200" fill="#444" font-family="Liberation Sans,sans-serif">20XX.XX.XX</text>
<path d="M238 32L272 40L268 56L236 47Z" fill="#fdc434"/><circle cx="254" cy="44" r="6.500" fill="#4cc4ee" stroke="#fff" stroke-width="1.500"/>
<path d="M252 62c3-5 8-5 10-3c5-3 10-1 14-1c4 0 8 2 10 4Z" fill="#c2ecff"/>
<!-- left traveler -->
<path d="M20 130L9 167H32L40 133Z" fill="#fdbdbd"/><path d="M44 132L33 167H50L53 132Z" fill="#fdbdbd"/>
<path d="M16 67C14 60 16 50 24 48L36 46L38 66L26 72Z" fill="#14a7c8"/>
<path d="M14 88C12 70 22 58 38 54L52 54C62 58 68 66 69 70L70 60L80 60C84 75 78 88 66 90L62 100H26L24 92Z" fill="#fbb300"/>
<path d="M32 56C38 62 36 75 34 80M56 54L62 72" stroke="#142045" stroke-width="2" fill="none"/>
<path d="M25 99H62L63 132L34 132L19 128Z" fill="#041a40"/>
<circle cx="44" cy="42" r="7.500" fill="#f6c0b0"/><path d="M37 42C36 33 50 30 53 36C48 37 44 40 43 46C40 46 38 45 37 42Z" fill="#f5733a"/>
<path d="M71 58L73 44L76 50L80 44L79 56L76 60Z" fill="#fdbdbd" stroke="#333" stroke-width=".4"/>
<!-- book -->
<path d="M71 145L84 121L99 135L89 154Z" fill="#8ad27e"/><path d="M99 135L101 140L92 156L89 154Z" fill="#fdc434"/>
<rect x="80" y="130" width="11" height="4" fill="#f2ec8e" transform="rotate(40 85 132)"/>
<path d="M68 130l4-3l8 14l-3 3Z" fill="#f2c66e"/>
<!-- right traveler -->
<path d="M196 102C206 90 218 84 230 82L236 112C222 116 206 112 196 105Z" fill="#fdbdbd"/>
<path d="M224 82L250 77L252 98L248 116L218 112L216 92Z" fill="#f5ecdc"/>
<path d="M224 80l13-9" stroke="#666" stroke-width=".6"/>
<path d="M264 94H298V160H262Z" fill="#1f93bf"/>
<path d="M251 82C262 74 285 76 296 82L298 96L256 92Z" fill="#ffb400"/>
<path d="M258 76l6 16M272 75l-6 17" stroke="#142045" stroke-width="3"/>
<circle cx="257" cy="98" r="9" fill="#f6c0b0"/><path d="M246 92C250 84 262 84 266 94L248 98Z" fill="#1a9ab8"/>
<path d="M232 112L258 106L282 128L270 146L234 148Z" fill="#f5823c"/>
<g fill="#fff"><path d="M242 122l7-4l3 7l-6 3Z"/><path d="M258 114l6 3l-2 6l-6-2Z"/><path d="M266 128l6 3l-3 5l-6-2Z"/><path d="M246 136l6 1l-1 6l-6-1Z"/></g>
<path d="M221 167C226 152 236 148 246 147H264L266 167Z" fill="#041a40"/>
<path d="M278 118L298 130V146L272 134Z" fill="#fdbdbd"/>
</svg></div>

<div class="ft" style="left:250px">学生五一假期规划</div><div class="fs" style="left:250px">更新于7天前</div>
<div class="ft" style="left:572px">未命名文件</div><div class="fs" style="left:572px">更新于7天前</div>
<div class="ft" style="left:895px">紫色插画风数字化营销方案PPT模板</div><div class="fs" style="left:895px">更新于7天前</div>
<div class="ft" style="left:1217px">新媒体下的母亲节营销</div><div class="fs" style="left:1217px">更新于7天前</div>
<div class="ft" style="left:1540px">蓝色插画风研学旅行活动介绍PPT模板</div><div class="fs" style="left:1540px">更新于29天前</div>
<div class="dots" style="left:521px"><i></i><i></i><i></i></div>
<div class="dots" style="left:844px"><i></i><i></i><i></i></div>
<div class="dots" style="left:1166px"><i></i><i></i><i></i></div>
<div class="dots" style="left:1489px"><i></i><i></i><i></i></div>
<div class="dots" style="left:1811px"><i></i><i></i><i></i></div>

<!-- floating -->
<div class="a" style="left:1820px;top:492px;width:36px;height:36px;border-radius:50%;background:linear-gradient(135deg,#8fc0ff,#6ea8f8)"></div>
<div class="a" style="left:1825px;top:636px;width:40px;height:40px;border-radius:50%;background:#fff;box-shadow:0 0 6px rgba(0,0,0,.14)"></div>
<div class="a" style="left:1821px;top:682px;width:50px;height:50px;border-radius:50%;background:#fff;box-shadow:0 0 6px rgba(0,0,0,.14)"></div>
<div class="a" style="left:1829px;top:692px;width:5px;height:14px;background:#f0c9cf"></div>
</div>
</body>
</html>
